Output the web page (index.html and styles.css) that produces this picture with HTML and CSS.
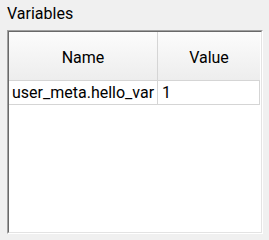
FILE: index.html
```html
<!DOCTYPE html>
<html lang="en">
<head>
    <meta charset="UTF-8">
    <title>Variables</title>
    <link rel="stylesheet" href="styles.css">
</head>
<body>
    <div class="panel">
        <div class="panel-title">Variables</div>
        <div class="frame-outer">
            <div class="frame-inner">
                <div class="var-table">
                    <div class="head-cell head-name">Name</div>
                    <div class="head-cell head-value">Value</div>
                    <div class="cell cell-name">user_meta.hello_var</div>
                    <div class="cell cell-value">1</div>
                </div>
            </div>
        </div>
    </div>
</body>
</html>
```

FILE: styles.css
```css
body {
    margin: 0;
    background-color: #f0f0f0;
    font-family: Roboto, "Liberation Sans", sans-serif;
    font-size: 16px;
    color: #000;
}

.panel {
    padding: 3px 6px 0 7px;
}

.panel-title {
    height: 27px;
    line-height: 22px;
}

.frame-outer {
    width: 254px;
    height: 202px;
    border-style: solid;
    border-width: 1px;
    border-color: #a0a0a0 #ffffff #ffffff #a0a0a0;
}

.frame-inner {
    height: 200px;
    border-style: solid;
    border-width: 1px;
    border-color: #696969 #e3e3e3 #e3e3e3 #696969;
    background-color: #fff;
}

.var-table {
    display: grid;
    grid-template-columns: 149px 102px;
    grid-template-rows: 49px 24px;
}

.head-cell {
    display: flex;
    align-items: center;
    justify-content: center;
    background: linear-gradient(#fcfcfc, #ededed);
    border-bottom: 1px solid #d5d5d5;
    padding-top: 3px;
}

.head-name {
    border-right: 1px solid #d5d5d5;
}

.cell {
    display: flex;
    align-items: center;
    padding-left: 3px;
    border-bottom: 1px solid #d5d5d5;
    white-space: nowrap;
    overflow: hidden;
}

.cell-name {
    border-right: 1px solid #d5d5d5;
}

.cell-value {
    padding-left: 4px;
    border-right: 1px solid #d5d5d5;
}
```
